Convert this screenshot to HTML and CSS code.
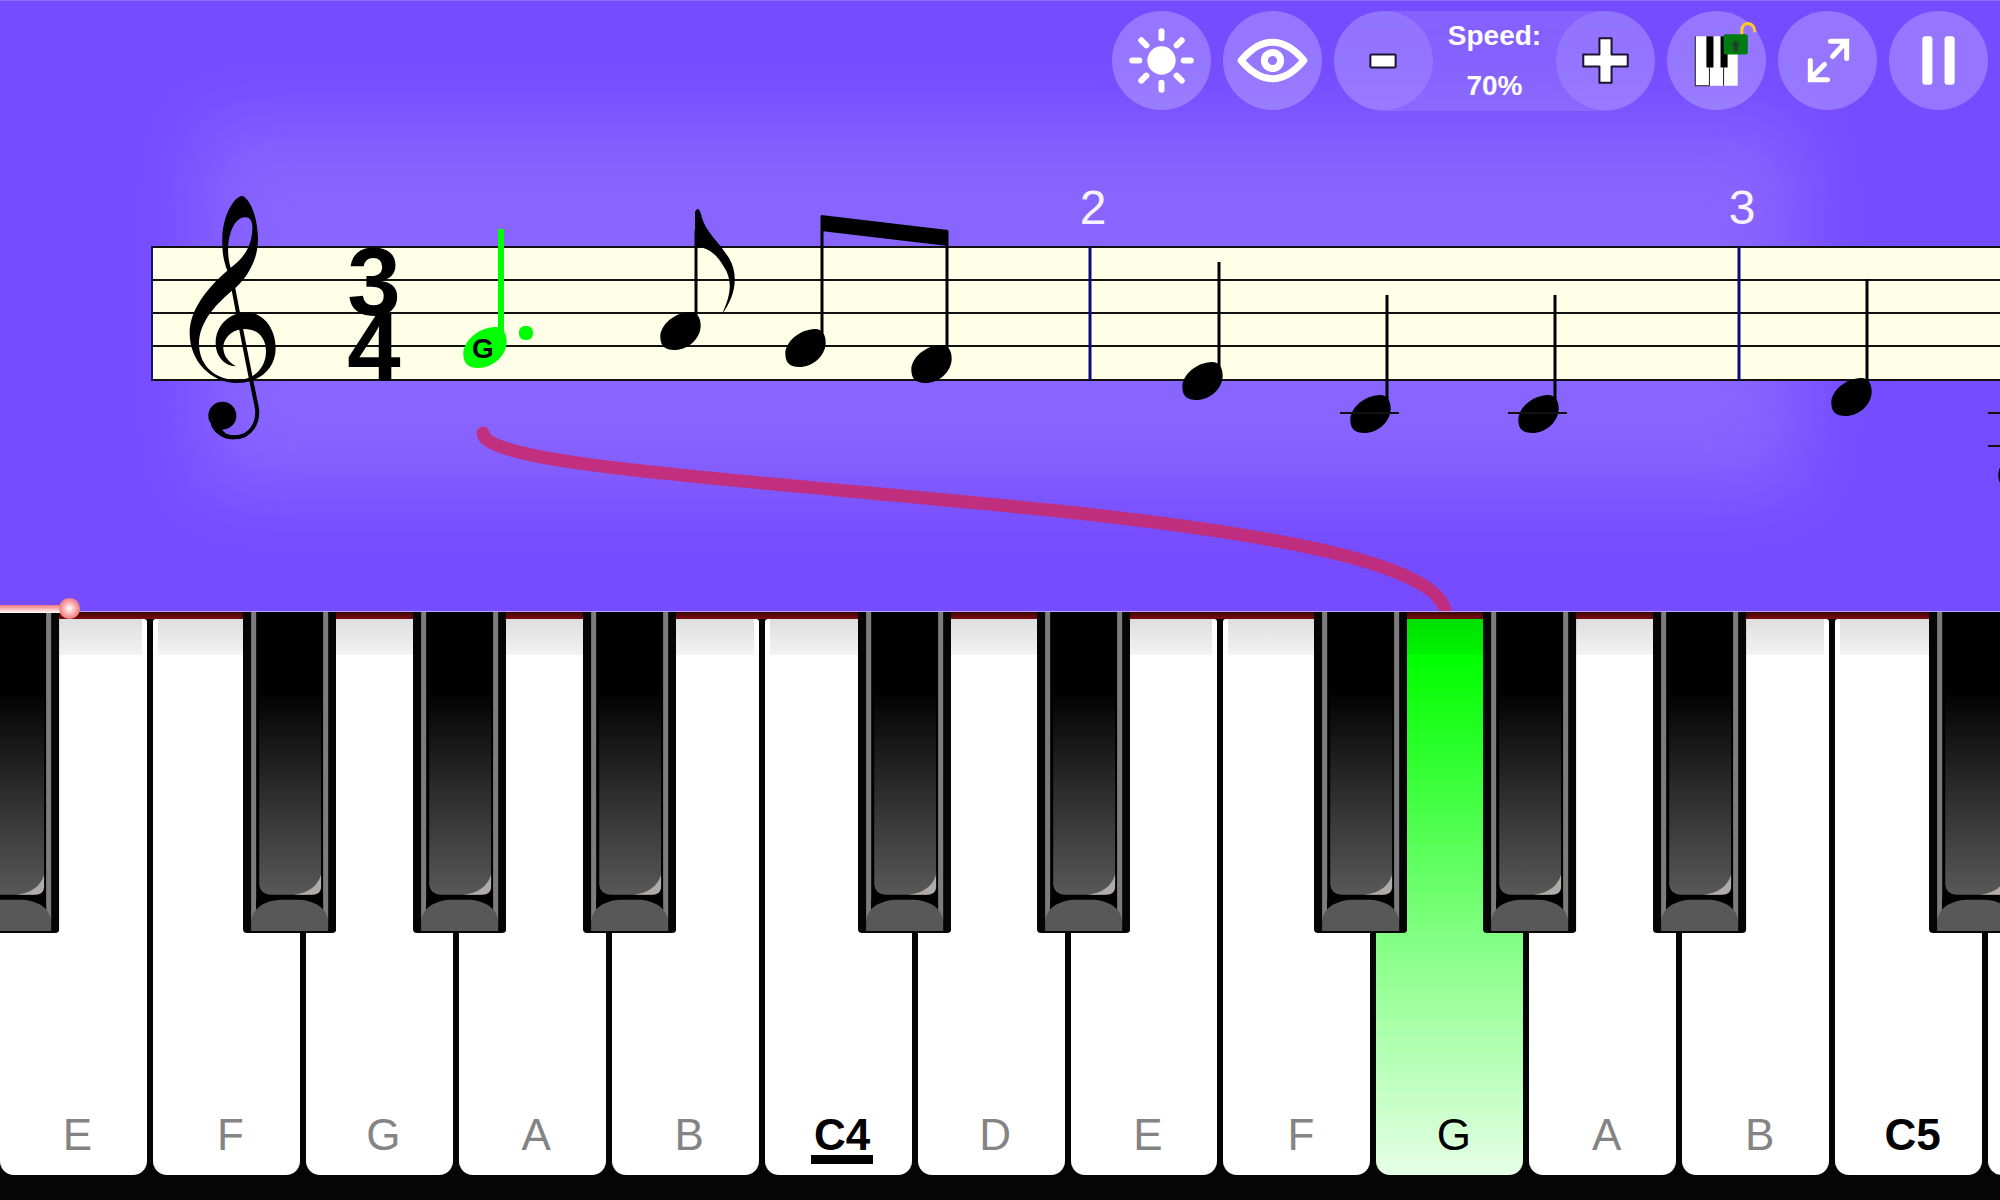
FILE: index.html
```html
<!DOCTYPE html>
<html lang="en">
<head>
<meta charset="utf-8">
<title>Piano practice</title>
<link rel="stylesheet" href="styles.css">
</head>
<body>
<svg class="defs" aria-hidden="true">
  <defs>
    <linearGradient id="ebony" x1="0" y1="0" x2="0" y2="1">
      <stop offset="0.27" stop-color="#000"/>
      <stop offset="1" stop-color="#585858"/>
    </linearGradient>
    <symbol id="black-key" viewBox="0 0 92 320" preserveAspectRatio="none">
      <path d="M0 0H92V316Q92 320 88 320H4Q0 320 0 316Z" fill="#050505"/>
      <path d="M12 0H80V300H12Z" fill="#000"/>
      <path d="M8 0H13V308H8ZM79 0H84V308H79Z" fill="#7c7c7c"/>
      <path d="M16 0H77V275Q76 282 68 282H27Q17 281 16 272Z" fill="url(#ebony)"/>
      <path d="M77 262V275Q76 282 68 282H50Q72 279 77 262Z" fill="#b0aaaa"/>
      <path d="M13 297Q26 286 46 286Q66 286 79 297V287H13Z" fill="#000"/>
      <path d="M8 318V308C10 292 27 287 38 287H54C65 287 82 292 84 308V318Z" fill="#585858"/>
    </symbol>
    <symbol id="head" viewBox="0 0 114 114" preserveAspectRatio="none">
      <path d="M1 78C-2 42 38 1 84 0C104 0 114 18 113 44C111 82 76 114 40 114C14 114 2 102 1 78Z"/>
    </symbol>
  </defs>
</svg>
<main class="app">
  <section class="score" aria-label="Score">
    <svg class="sheet" viewBox="0 0 2000 612" role="img" aria-label="Sheet music">
      <rect class="paper" x="152" y="247" width="1860" height="133"/>
      <path class="staff" d="M152 247H2000M152 280H2000M152 313H2000M152 346H2000M152 380H2000"/>
      <path class="staff-start" d="M152 246V381"/>
      <path class="barline" d="M1090 247V380M1739 247V380"/>
      <text class="bar-number" x="1093" y="224">2</text>
      <text class="bar-number" x="1742" y="224">3</text>

      <g transform="translate(140 180) scale(.3333)">
        <path fill-rule="evenodd" d="M307 48C325 52 352 100 354 175C355 235 325 290 285 325C230 370 177 425 177 492C178 560 228 599 290 600C345 600 378 560 378 515C378 470 350 446 310 447C270 450 248 480 250 505C252 530 265 545 288 559C250 558 227 525 227 490C227 435 270 397 320 397C370 397 407 445 407 505C407 565 360 609 290 609C215 609 149 545 149 460C149 390 200 325 262 272C250 240 246 215 247 175C248 110 280 50 307 48ZM272 263C305 240 334 205 337 150C338 130 334 112 316 112C293 112 278 135 270 165C262 190 262 230 272 263Z"/>
        <path class="clef-tail" d="M280 325C300 430 325 560 350 680C358 724 335 772 283 772C252 772 228 756 218 732"/>
        <circle cx="247" cy="707" r="42"/>
        <path d="M212 725C225 765 250 778 283 778L283 766C262 766 250 758 245 745Z"/>
      </g>
      <text class="meter" x="374" y="315">3</text>
      <text class="meter" x="374" y="381">4</text>

      <g class="current">
        <path d="M498 229H504V345H498Z"/>
        <use href="#head" x="463" y="327" width="44" height="41"/>
        <rect x="519" y="326" width="14" height="14" rx="6"/>
        <text class="note-name" x="483" y="358">G</text>
      </g>

      <path class="stem" d="M696 230V325M822 216V342M947 231V358M1219 262V375M1387 295V408M1555 295V408M1867 279V391"/>
      <path d="M695 325V212Q698 205 701 214C705 232 716 238 729 258C740 277 734 298 722 314C732 293 732 279 724 267C716 253 708 248 697 247V325Z"/>
      <path d="M821 215L948 230V246L821 231Z"/>
      <use href="#head" x="660" y="312" width="41" height="38"/>
      <use href="#head" x="785" y="329" width="41" height="38"/>
      <use href="#head" x="911" y="345" width="41" height="38"/>
      <use href="#head" x="1182" y="362" width="41" height="38"/>
      <use href="#head" x="1350" y="395" width="41" height="38"/>
      <use href="#head" x="1518" y="395" width="41" height="38"/>
      <use href="#head" x="1831" y="378" width="41" height="38"/>
      <use href="#head" x="1998" y="450" width="41" height="38"/>
      <path class="ledger" d="M1340 413H1399M1508 413H1567M1988 413H2047M1988 446H2047"/>
      <path class="guide" d="M483 433C483 494 1446 494 1446 616"/>
    </svg>

    <div class="toolbar" role="toolbar" aria-label="Playback">
      <button class="round" aria-label="Brightness">
        <svg viewBox="0 0 98 98"><circle cx="49" cy="49" r="14" fill="#fff"/><path class="ray" d="M49 20V27M49 71V78M20 49H27M71 49H78M29 29L34 34M64 64L69 69M69 29L64 34M34 64L29 69"/></svg>
      </button>
      <button class="round" aria-label="View">
        <svg viewBox="0 0 98 98"><path class="eye" d="M18 49C38 25 60 25 80 49C60 73 38 73 18 49Z"/><circle class="eye" cx="49" cy="49" r="8"/></svg>
      </button>
      <div class="speed">
        <button class="round" aria-label="Slower">
          <svg viewBox="0 0 98 98"><rect class="outlined" x="36" y="43" width="25" height="13" rx="1"/></svg>
        </button>
        <p class="speed-text"><span>Speed:</span><span>70%</span></p>
        <button class="round" aria-label="Faster">
          <svg viewBox="0 0 98 98"><path class="outlined" d="M43 27H55V43H71V55H55V71H43V55H27V43H43Z"/></svg>
        </button>
      </div>
      <button class="round" aria-label="Unlock keyboard">
        <svg viewBox="0 0 98 98"><path fill="#fff" d="M28 25H70V74H28Z"/><path d="M28 25V74H42M42 56V74M56 56V74" fill="none" stroke="#222"/><path d="M39 25H46V56H39ZM53 25H60V56H53Z"/><path d="M74 24V19C74 10 87 10 87 21" fill="none" stroke="#ffc926" stroke-width="3"/><rect x="56" y="23" width="24" height="20" rx="2" fill="#007a12"/><circle cx="68" cy="33" r="3" fill="#243f2a"/><path d="M66 33H70V40H66Z" fill="#243f2a"/></svg>
      </button>
      <button class="round" aria-label="Full screen">
        <svg viewBox="0 0 98 98"><path class="arrow" d="M52 30H68V47M66 32L54 45M46 53L34 65M32 49V68H49"/></svg>
      </button>
      <button class="round" aria-label="Pause">
        <svg viewBox="0 0 98 98"><rect x="33" y="25" width="10" height="48" rx="3" fill="#fff"/><rect x="55" y="25" width="10" height="48" rx="3" fill="#fff"/></svg>
      </button>
    </div>
  </section>

  <section class="piano" aria-label="Keyboard">
    <input class="position" type="range" min="0" max="100" step="0.01" value="2.96" aria-label="Position">
    <ul class="keys">
      <li><button class="white" aria-label="D"></button><button class="black e-flat" aria-label="D sharp"><svg><use href="#black-key"/></svg></button></li>
      <li><button class="white">E</button></li>
      <li><button class="white">F</button><button class="black f-sharp" aria-label="F sharp"><svg><use href="#black-key"/></svg></button></li>
      <li><button class="white">G</button><button class="black g-sharp" aria-label="G sharp"><svg><use href="#black-key"/></svg></button></li>
      <li><button class="white">A</button><button class="black b-flat" aria-label="A sharp"><svg><use href="#black-key"/></svg></button></li>
      <li><button class="white">B</button></li>
      <li><button class="white octave middle">C4</button><button class="black c-sharp" aria-label="C sharp"><svg><use href="#black-key"/></svg></button></li>
      <li><button class="white">D</button><button class="black e-flat" aria-label="D sharp"><svg><use href="#black-key"/></svg></button></li>
      <li><button class="white">E</button></li>
      <li><button class="white">F</button><button class="black f-sharp" aria-label="F sharp"><svg><use href="#black-key"/></svg></button></li>
      <li><button class="white active">G</button><button class="black g-sharp" aria-label="G sharp"><svg><use href="#black-key"/></svg></button></li>
      <li><button class="white">A</button><button class="black b-flat" aria-label="A sharp"><svg><use href="#black-key"/></svg></button></li>
      <li><button class="white">B</button></li>
      <li><button class="white octave">C5</button><button class="black c-sharp" aria-label="C sharp"><svg><use href="#black-key"/></svg></button></li>
      <li><button class="white" aria-label="D"></button></li>
    </ul>
  </section>
</main>
</body>
</html>
```
FILE: styles.css
```css
* {
  box-sizing: border-box;
}

body {
  margin: 0;
  font-family: "Liberation Sans", Arial, sans-serif;
  background: #050505;
}

button {
  margin: 0;
  padding: 0;
  border: 0;
  font: inherit;
  cursor: pointer;
}

.defs {
  position: absolute;
  width: 0;
  height: 0;
}

.app {
  display: flex;
  flex-direction: column;
  min-height: 100vh;
  overflow: hidden;
}

/* Score */

.score {
  position: relative;
  overflow: hidden;
  background: #754cff;
  border-top: 1px solid #8e6cff;
  border-bottom: 1px solid #b9a6ff;
}

.score::before {
  content: "";
  position: absolute;
  inset: 20% 10%;
  background: #8965ff;
  filter: blur(40px);
}

.sheet {
  position: relative;
  display: block;
  width: 100%;
  margin-top: -1px;
  margin-bottom: -1px;
}

.paper {
  fill: #ffffe8;
}

.staff,
.ledger {
  stroke: #111;
  stroke-width: 2;
}

.staff-start {
  stroke: #14146e;
  stroke-width: 2;
}

.barline {
  stroke: #0a0a80;
  stroke-width: 3;
}

.bar-number {
  fill: #f6f2ff;
  font-size: 48px;
  text-anchor: middle;
}

.meter {
  font-size: 96px;
  font-weight: bold;
  text-anchor: middle;
}

.clef-tail {
  fill: none;
  stroke: #000;
  stroke-width: 12;
}

.current {
  fill: #0f0;
}

.note-name {
  fill: #000;
  font-size: 28px;
  font-weight: bold;
  text-anchor: middle;
}

.stem {
  stroke: #000;
  stroke-width: 3;
}

.guide {
  fill: none;
  stroke: #c82a70;
  stroke-opacity: 0.9;
  stroke-width: 13;
  stroke-linecap: round;
}

/* Toolbar */

.toolbar {
  position: absolute;
  top: 10px;
  right: 12px;
  display: flex;
  gap: 12px;
}

.round {
  width: 99px;
  height: 99px;
  border-radius: 50%;
  background: rgba(255, 255, 255, 0.24);
}

.round svg {
  display: block;
  width: 100%;
}

.speed {
  display: flex;
  border-radius: 50px;
  background: rgba(255, 255, 255, 0.12);
}

.speed .round {
  background: rgba(255, 255, 255, 0.12);
}

.speed-text {
  display: flex;
  flex-direction: column;
  align-items: center;
  width: 123px;
  margin: 0;
  color: #fff;
  font-size: 28px;
  font-weight: bold;
  line-height: 50px;
}

.ray {
  stroke: #fff;
  stroke-width: 6;
  stroke-linecap: round;
}

.eye {
  fill: none;
  stroke: #fff;
  stroke-width: 7;
  stroke-linejoin: round;
}

.arrow {
  fill: none;
  stroke: #fff;
  stroke-width: 5;
  stroke-linecap: round;
}

.outlined {
  fill: #fff;
  stroke: #1c1430;
  stroke-width: 2;
  stroke-linejoin: round;
}

/* Keyboard */

.piano {
  position: relative;
  flex: 1;
  display: flex;
  min-height: 400px;
  padding-bottom: 25px;
}

.position {
  position: absolute;
  z-index: 3;
  top: -14px;
  left: 0;
  width: 100%;
  height: 21px;
  margin: 0;
  appearance: none;
  background: linear-gradient(#f07878, #fff) 0 7px / 3.4% 8px no-repeat;
}

.position::-webkit-slider-thumb {
  appearance: none;
  width: 21px;
  height: 21px;
  border-radius: 50%;
  background: radial-gradient(#fff, #f58a8a 60%, #ee7070);
}

.keys {
  flex: none;
  display: flex;
  width: 114.7%;
  margin: 0 0 0 -7.8%;
  padding: 0;
  list-style: none;
  background: linear-gradient(#3c0606, #7c0c10 7px, #050505 7px);
}

.keys li {
  position: relative;
  flex: 1;
  display: flex;
  padding: 7px 3px 0;
}

.white {
  flex: 1;
  display: flex;
  flex-direction: column;
  align-items: center;
  justify-content: flex-end;
  padding: 0 0 8px 8px;
  border-radius: 3px 3px 14px 14px;
  background: linear-gradient(#dedede, #f3f3f3) center 0 / calc(100% - 10px) 36px no-repeat #fff;
  color: #848484;
  font-size: 44px;
  line-height: 64px;
}

.octave {
  color: #000;
  font-weight: bold;
}

.middle {
  padding-bottom: 11px;
  line-height: 40px;
}

.middle::after {
  content: "";
  width: 62px;
  height: 9px;
  background: #000;
}

.active {
  background: linear-gradient(rgba(0, 0, 0, 0.13), rgba(0, 0, 0, 0.04)) center 0 / calc(100% - 10px) 36px no-repeat,
    linear-gradient(#0f0, #0f0 7%, #82ff82 57%, #e6ffe6);
  color: #000;
}

.black {
  position: absolute;
  z-index: 2;
  top: 0;
  width: 61%;
  height: 57%;
  background: none;
}

.black svg {
  display: block;
  width: 100%;
  height: 100%;
}

.c-sharp {
  left: 63%;
}

.e-flat {
  left: 80%;
}

.f-sharp {
  left: 61%;
}

.g-sharp {
  left: 72%;
}

.b-flat {
  left: 83%;
}
```
